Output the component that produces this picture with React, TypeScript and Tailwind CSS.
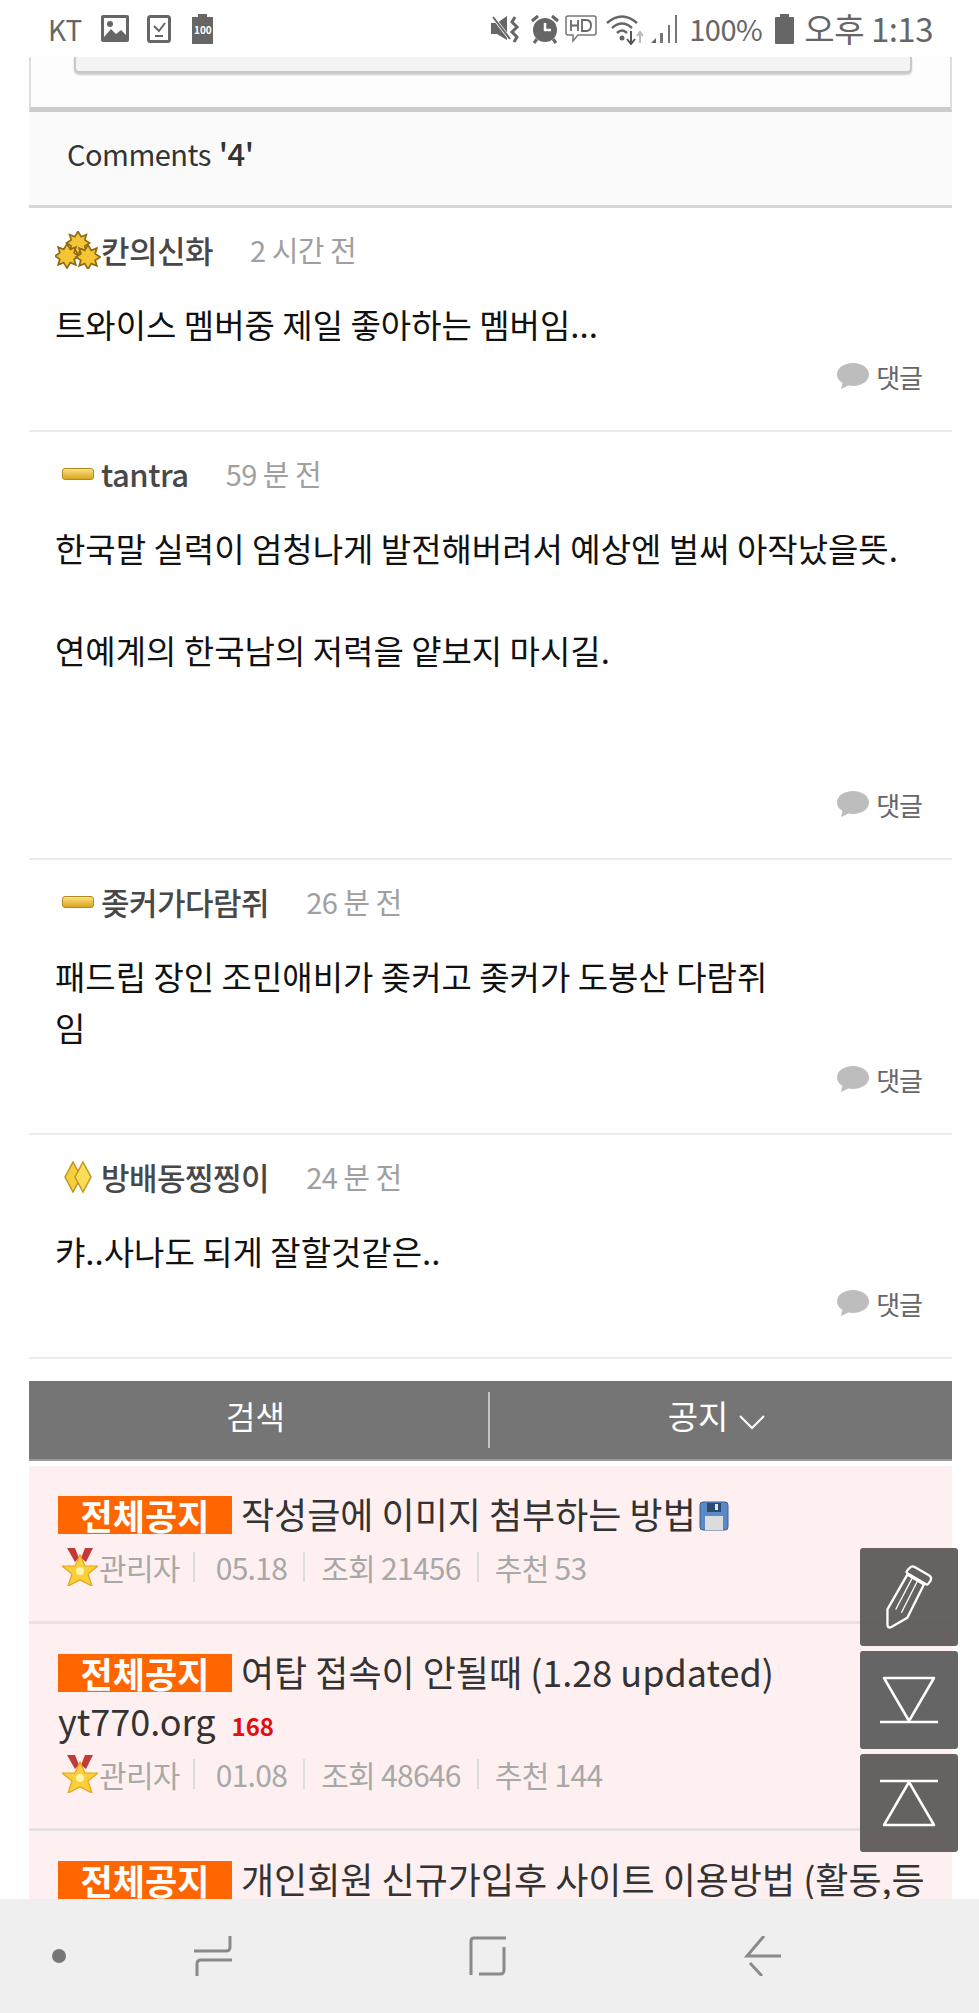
const comments = [
  { name: '칸의신화', time: '2 시간 전', badge: 'leaf', body: '트와이스 멤버중 제일 좋아하는 멤버임...' },
  {
    name: 'tantra',
    time: '59 분 전',
    badge: 'bar',
    body: '한국말 실력이 엄청나게 발전해버려서 예상엔 벌써 아작났을뜻.\n\n연예계의 한국남의 저력을 얕보지 마시길.\n\n\n',
  },
  { name: '좆커가다람쥐', time: '26 분 전', badge: 'bar', body: '패드립 장인 조민애비가 좆커고 좆커가 도봉산 다람쥐\n임' },
  { name: '방배동찡찡이', time: '24 분 전', badge: 'diamond', body: '캬..사나도 되게 잘할것같은..' },
]

const Star = ({ x, y, s }: { x: number; y: number; s: number }) => (
  <path
    transform={`translate(${x} ${y}) scale(${s})`}
    d="M0-11 3-6 8-8 6.500-3 11 0 6.500 3 8 8 3 6 0 11-3 6-8 8-6.500 3-11 0-6.500-3-8-8-3-6Z"
    fill="#f4c636"
    stroke="#8f6b12"
    strokeWidth="1.600"
  />
)

function Badge({ kind }: { kind: string }) {
  if (kind === 'leaf') {
    return (
      <svg width="46" height="38" viewBox="0 0 46 38" className="shrink-0">
        <Star x={23} y={12} s={1.05} />
        <Star x={12} y={25} s={1.1} />
        <Star x={33} y={26} s={1.1} />
      </svg>
    )
  }
  if (kind === 'diamond') {
    return (
      <svg width="28" height="32" viewBox="0 0 28 32" className="shrink-0">
        <path d="M9 1 17 16 9 31 1 16Z" fill="#f6cf3c" stroke="#c2951d" strokeWidth="1.500" />
        <path d="M19 1 27 16 19 31 11 16Z" fill="#fbdc58" stroke="#c2951d" strokeWidth="1.500" />
      </svg>
    )
  }
  return (
    <div className="h-[12px] w-[32px] shrink-0 rounded-[3px] border border-[#b18a1f] bg-gradient-to-b from-[#fbe27a] to-[#d9a514]" />
  )
}

function CommentRow({ c }: { c: (typeof comments)[number] }) {
  return (
    <div className="border-b-2 border-[#ececec] pb-[26px] pl-[26px] pr-[30px] pt-[21px]">
      <div className="flex h-[42px] items-center">
        <div className="flex w-[46px] justify-center">
          <Badge kind={c.badge} />
        </div>
        <span className="text-[31px] font-medium tracking-[-0.5px] text-[#484848]">{c.name}</span>
        <span className="ml-[37px] text-[29px] tracking-[-0.5px] text-[#a0a0a0]">{c.time}</span>
      </div>
      <div className="mt-[28px] whitespace-pre text-[33px] leading-[51px] text-[#111]">{c.body}</div>
      <div className="flex h-[54px] items-center justify-end gap-[6px] pb-[2px]">
        <svg width="34" height="28" viewBox="0 0 34 28">
          <path d="M17 1C8 1 1 6 1 12.500C1 16 3 19 6.500 21L5 27 12.500 23.500C14 23.800 15.500 24 17 24C26 24 33 19 33 12.500S26 1 17 1Z" fill="#bdbdbd" />
        </svg>
        <span className="text-[26px] tracking-[-1px] text-[#666]">댓글</span>
      </div>
    </div>
  )
}

function Medal() {
  return (
    <svg width="36" height="38" viewBox="0 0 36 38" className="ml-[4px] shrink-0">
      <path d="M5 0H13L17 10 13 14ZM23 0H31L24 14 19 10Z" fill="#c33a3a" />
      <path
        d="M18 7 23 18H36L26 26 30 38 18 32 6 38 10 26 0 18H13Z"
        fill="#f9cf3a"
        stroke="#e7a21c"
        strokeWidth="1.200"
      />
      <circle cx="18" cy="23" r="4" fill="#fff3b0" />
    </svg>
  )
}

function NoticeRow({ title, extra, date, views, likes, count, file }: {
  title: string
  extra?: string
  date?: string
  views?: string
  likes?: string
  count?: string
  file?: boolean
}) {
  return (
    <div className="border-b-[3px] border-[#e8e2e2] pb-[36px] pl-[29px] pr-[27px] pt-[24px]">
      <div className="whitespace-nowrap text-[36px] leading-[46px] text-[#333]">
        <span className="mr-[9px] inline-block h-[38px] w-[174px] bg-[#ff6600] text-center align-[-1px] text-[35px] font-bold leading-[37px] text-white">
          전체공지
        </span>
        {title}
        {file && (
          <svg width="30" height="30" viewBox="0 0 30 30" className="ml-[3px] inline-block align-[-2px]">
            <rect x="1" y="1" width="28" height="28" rx="3" fill="#5a8ac6" stroke="#3c5f8f" />
            <rect x="8" y="2" width="14" height="9" fill="#2f4a70" />
            <rect x="16" y="3" width="3" height="6" fill="#dfe7f2" />
            <rect x="6" y="15" width="18" height="14" fill="#dcdcdc" />
          </svg>
        )}
        {extra && (
          <span className="mt-[3px] block">
            {extra}
            <span className="ml-[16px] text-[24px] font-bold leading-none text-[#e01010]">{count}</span>
          </span>
        )}
      </div>
      {date && (
        <div className="mt-[13px] flex h-[36px] items-center text-[30px] tracking-[-0.7px] text-[#a8a8a8]">
          <Medal />
          <span className="ml-[1px]">관리자</span>
          <span className="ml-[13px] mr-[21px] h-[30px] w-[2px] bg-[#dddddd]" />
          <span>{date}</span>
          <span className="mx-[16px] h-[30px] w-[2px] bg-[#dddddd]" />
          <span>조회 {views}</span>
          <span className="mx-[16px] h-[30px] w-[2px] bg-[#dddddd]" />
          <span>추천 {likes}</span>
        </div>
      )}
    </div>
  )
}

function StatusBar() {
  return (
    <div className="flex h-[57px] shrink-0 items-center bg-white pl-[48px] pr-[46px] text-[#666]">
      <span className="text-[28px] leading-none">KT</span>
      <svg width="28" height="27" viewBox="0 0 28 27" className="ml-[19px]">
        <rect width="28" height="27" rx="2" fill="#666" />
        <rect x="3" y="3" width="22" height="21" fill="#fff" />
        <circle cx="9" cy="9" r="3" fill="#666" />
        <path d="M3 22 10 14 15 19 20 15 25 20V24H3Z" fill="#666" />
      </svg>
      <svg width="24" height="28" viewBox="0 0 24 28" className="ml-[18px]">
        <rect x="1.500" y="1.500" width="21" height="25" rx="2" fill="none" stroke="#666" strokeWidth="3" />
        <path d="M7 11 12 16 18 8" fill="none" stroke="#666" strokeWidth="2" />
        <path d="M8 21H16" stroke="#666" strokeWidth="2" />
      </svg>
      <div className="ml-[21px] flex h-[30px] w-[21px] flex-col items-center">
        <div className="h-[3px] w-[9px] bg-[#666]" />
        <div className="flex h-[27px] w-[21px] items-center justify-center bg-[#666] text-[10px] font-bold leading-none text-white">
          100
        </div>
      </div>
      <div className="flex-1" />
      <svg width="32" height="30" viewBox="0 0 32 30">
        <path d="M1 9H7L17 2V26L7 20H1Z" fill="#666" />
        <path d="M3 3 20 25" stroke="#fff" strokeWidth="3.500" />
        <path d="M3 3 20 25" stroke="#666" strokeWidth="2" />
        <path d="M25 3 22 8 27 13 22 18 27 23 24 28" fill="none" stroke="#666" strokeWidth="3" />
      </svg>
      <svg width="30" height="32" viewBox="0 0 30 32" className="ml-[8px]">
        <circle cx="15" cy="17" r="12" fill="#666" />
        <path d="M15 10V17H21" fill="none" stroke="#fff" strokeWidth="2.500" />
        <path d="M2 8 8 3M28 8 22 3M7 26 4 30M23 26 26 30" stroke="#666" strokeWidth="3" />
      </svg>
      <svg width="32" height="30" viewBox="0 0 32 30" className="ml-[5px]">
        <path d="M3 2H29Q31 2 31 4V19Q31 21 29 21H13L8 27V21H3Q1 21 1 19V4Q1 2 3 2Z" fill="none" stroke="#777" strokeWidth="1.500" />
        <path d="M6 6V17M13 6V17M6 11.500H13M17 6V17H21Q26 17 26 11.500T21 6Z" fill="none" stroke="#666" strokeWidth="1.800" />
      </svg>
      <svg width="44" height="32" viewBox="0 0 44 32" className="ml-[9px]">
        <path d="M1 10Q16-3 31 10M6 15Q16 6 26 15M11 20Q16 15 21 20" fill="none" stroke="#666" strokeWidth="2.500" />
        <circle cx="16" cy="25" r="2.500" fill="#666" />
        <path d="M25 18V30M21 26 25 31 29 26" fill="none" stroke="#555" strokeWidth="2" />
        <path d="M34 30V20M31 23 34 19 37 23" fill="none" stroke="#bbb" strokeWidth="2" />
      </svg>
      <svg width="28" height="30" viewBox="0 0 28 30">
        <path d="M1 29 6 24V29Z" fill="#666" />
        <path d="M10 19H13V29H10ZM18 11H20V29H18ZM25 1H27V29H25Z" fill="#777" />
      </svg>
      <span className="ml-[11px] text-[29px] leading-none tracking-[-0.5px]">100%</span>
      <div className="ml-[13px] flex h-[30px] w-[19px] flex-col items-center">
        <div className="h-[3px] w-[9px] bg-[#666]" />
        <div className="h-[27px] w-[19px] rounded-[1px] bg-[#666]" />
      </div>
      <span className="ml-[10px] text-[33px] leading-none tracking-[-0.5px]">오후 1:13</span>
    </div>
  )
}

function NavBar() {
  return (
    <div className="flex h-[114px] shrink-0 items-center bg-[#efefef]">
      <div className="ml-[52px] h-[14px] w-[14px] rounded-full bg-[#777]" />
      <svg width="38" height="40" viewBox="0 0 38 40" className="ml-[128px]">
        <path d="M36 0V11Q36 15 32 15H0M38 24H7Q3 24 3 28V40" fill="none" stroke="#8a8a8a" strokeWidth="3" />
      </svg>
      <svg width="37" height="40" viewBox="0 0 37 40" className="ml-[237px]">
        <path d="M37 2H5Q2 2 2 5V39M35 11V34Q35 38 31 38H10" fill="none" stroke="#8a8a8a" strokeWidth="3" />
      </svg>
      <svg width="37" height="40" viewBox="0 0 37 40" className="ml-[238px]">
        <path d="M20 0 3 20H37M6 27 18 40" fill="none" stroke="#8a8a8a" strokeWidth="3" />
      </svg>
    </div>
  )
}

export default function App() {
  return (
    <div className="relative flex h-[2013px] w-[979px] flex-col overflow-hidden bg-white font-['Noto_Sans_CJK_KR','Noto_Sans',sans-serif]">
      <StatusBar />

      <div className="min-h-0 flex-1 overflow-hidden">
        <div className="ml-[29px] mr-[27px]">
          {/* post bottom, scrolled away */}
          <div className="h-[55px] border-x-2 border-b-[5px] border-x-[#dedede] border-b-[#cccccc] bg-[#fdfdfd] pl-[43px] pr-[38px]">
            <div className="h-[16px] rounded-b-[5px] border-x-2 border-b-2 border-[#c8c8c8] bg-[#f3f3f3] shadow-[0_2px_2px_rgba(0,0,0,0.2)]" />
          </div>

          <div className="flex h-[96px] items-center border-b-[3px] border-[#d6d6d6] bg-[#fafafa] pb-[10px] pl-[38px] text-[29px] tracking-[-0.5px] text-[#333]">
            Comments <span className="ml-[8px] text-[31px] font-medium">'4'</span>
          </div>

          {comments.map((c) => (
            <CommentRow key={c.name} c={c} />
          ))}

          <div className="mt-[22px] flex h-[80px] items-center border-b-2 border-[#999] bg-[#757575] text-[32px] leading-none text-white">
            <div className="flex h-[56px] w-[461px] items-center justify-center border-r-2 border-[#c4c4c4] pb-[10px] pr-[6px]">검색</div>
            <div className="flex flex-1 items-center justify-center gap-[10px] pb-[10px] pr-[8px] text-[33px]">
              공지
              <svg width="28" height="16" viewBox="0 0 28 16" className="mt-[14px]">
                <path d="M2 2 14 14 26 2" fill="none" stroke="#fff" strokeWidth="2" />
              </svg>
            </div>
          </div>

          <div className="mt-[5px] bg-[#fef0f0]">
            <NoticeRow title="작성글에 이미지 첨부하는 방법" file date="05.18" views="21456" likes="53" />
            <NoticeRow
              title="여탑 접속이 안될때 (1.28 updated)"
              extra="yt770.org"
              count="168"
              date="01.08"
              views="48646"
              likes="144"
            />
            <NoticeRow title="개인회원 신규가입후 사이트 이용방법 (활동,등" />
          </div>
        </div>
      </div>

      <NavBar />

      {/* floating buttons */}
      <div className="absolute left-[860px] top-[1548px] flex flex-col gap-[5px]">
        <div className="flex h-[98px] w-[98px] items-center justify-center rounded-[3px] bg-[#5f5a5a]/95">
          <svg width="50" height="68" viewBox="670 605 150 205">
            <path d="M680 745 740 640 790 670 740 770 692 798Q680 803 680 790Z" fill="none" stroke="#fff" strokeWidth="7" strokeLinejoin="round" />
            <path d="M745 622Q752 612 762 617L805 642Q815 648 810 658L803 668Q800 672 795 668L740 636Q736 633 738 630Z" fill="none" stroke="#fff" strokeWidth="7" />
            <path d="M705 745 755 650M722 755 770 660" fill="none" stroke="#fff" strokeWidth="4" />
          </svg>
        </div>
        <div className="flex h-[98px] w-[98px] items-center justify-center rounded-[3px] bg-[#656565]">
          <svg width="58" height="48" viewBox="0 0 58 48">
            <path d="M4 2H54L29 45Z" fill="none" stroke="#fff" strokeWidth="2.500" strokeLinejoin="round" />
            <path d="M0 46H58" stroke="#fff" strokeWidth="2.500" />
          </svg>
        </div>
        <div className="flex h-[98px] w-[98px] items-center justify-center rounded-[3px] bg-[#5f5a5a]/95">
          <svg width="58" height="48" viewBox="0 0 58 48">
            <path d="M29 3 54 46H4Z" fill="none" stroke="#fff" strokeWidth="2.500" strokeLinejoin="round" />
            <path d="M0 2H58" stroke="#fff" strokeWidth="2.500" />
          </svg>
        </div>
      </div>
    </div>
  )
}
